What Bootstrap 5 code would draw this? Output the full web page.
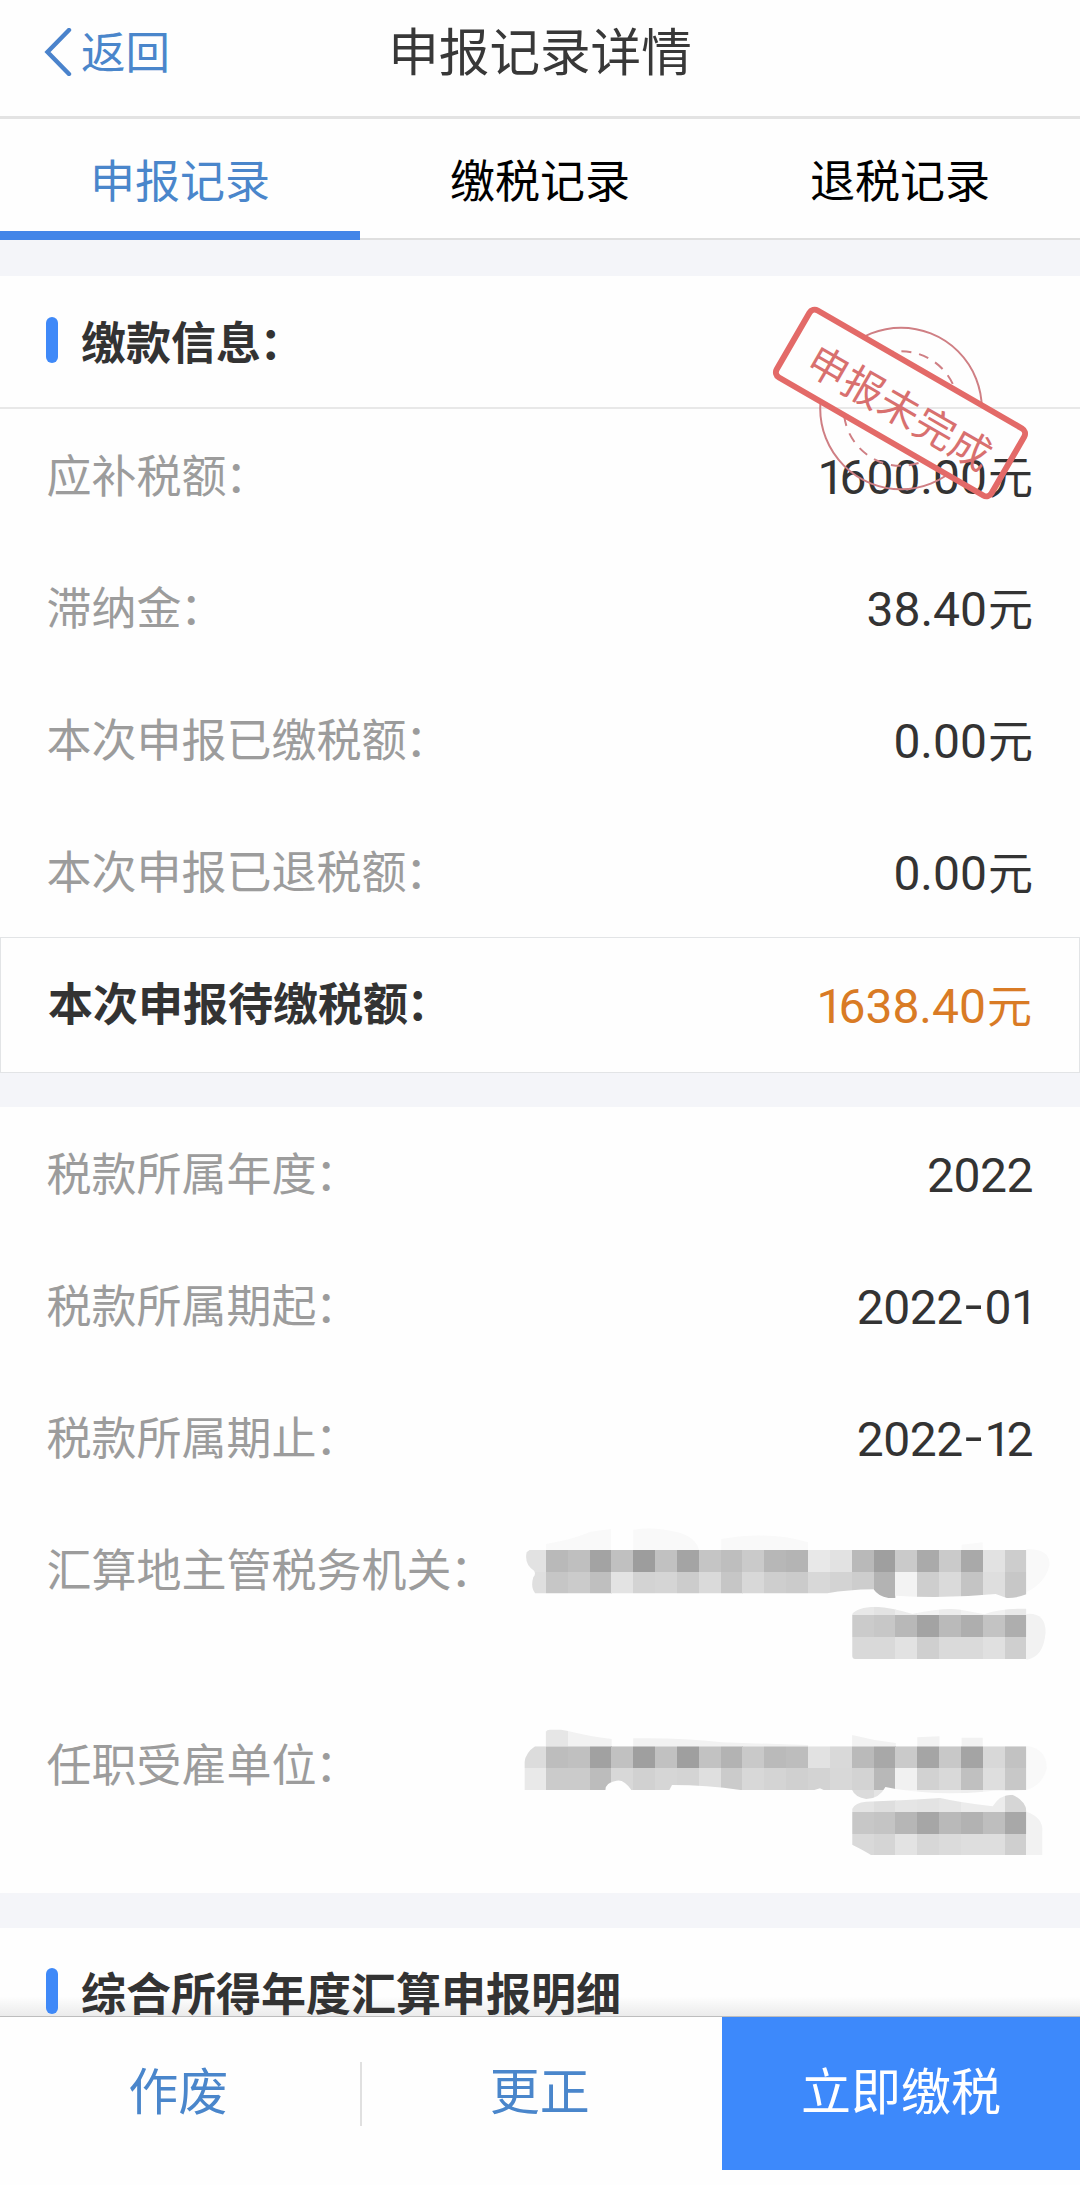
<!DOCTYPE html>
<html lang="zh-CN">
<head>
<meta charset="utf-8">
<meta name="viewport" content="width=device-width, initial-scale=1">
<title>申报记录详情</title>
<link href="https://cdn.jsdelivr.net/npm/bootstrap@5.3.0/dist/css/bootstrap.min.css" rel="stylesheet">
<style>
  body { font-family: "Noto Sans CJK SC", sans-serif; font-size: 45px; line-height: 1; color: #333; background: #fefefe; overflow: hidden; }
  .screen { width: 1080px; height: 2185px; }
  .topbar { height: 119px; border-bottom: 3px solid #e3e3e3; padding: 0 44px 18px; }
  .topbar .side { flex: 1 0 0; color: #4a86cb; }
  .topbar .side svg { margin-top: 5px; }
  .topbar .side span { margin: 2px 0 0 7px; font-size: 44.5px; }
  .topbar h1 { font-size: 50.6px; font-weight: 400; line-height: 1; color: #383838; }
  .tabs { height: 121px; border-bottom: 2px solid #dfdfdf; }
  .tabs .nav-link { color: #000; height: 121px; padding: 0 0 2px; border-radius: 0; }
  .tabs .nav-link.active { color: #4a86cb; border-bottom: 9px solid #4285e8; padding: 7px 0 0; }
  .band { background: #f4f5f9; flex: none; }
  .heading { height: 133px; border-bottom: 2px solid #e8e8e8; padding: 0 46px 4px; gap: 23px; }
  .heading h2 { font-size: 45px; font-weight: 700; line-height: 1; color: #333; padding-top: 1px; }
  .marker { width: 12px; height: 46px; border-radius: 6px; background: #3f89f8; }
  .item { height: 132px; padding: 0 47px 0 46.5px; }
  .item .key { color: #9c9c9c; padding-bottom: 4px; }
  .colon { margin-left: -1.5px; }
  .item.tall { height: 195px; padding-right: 0; }
  .item.tall .key { height: 132px; }
  .val { padding-top: 3px; white-space: nowrap; }
  .num { font-family: Roboto, sans-serif; font-size: 48px; white-space: nowrap; }
  .val .num { margin-right: 1px; }
  .year { letter-spacing: -.5px; padding-top: 5px; }
  .one { letter-spacing: -5px; }
  .dash { display: inline-block; transform: translateY(-2px) scaleX(1.3); margin: 0 5px 0 4px; }
  .due { height: 136px; border: 1px solid #e2e4e6; padding: 0 47px; }
  .due .key { padding-bottom: 7px; }
  .due .val { color: #d97b25; padding-top: 1px; }
  .stamp { position: absolute; left: 740px; top: 280px; }
  .stamp text { font-family: "Noto Sans CJK SC", sans-serif; font-size: 40.5px; letter-spacing: .6px; }
  .last { height: 88px; border: 0; padding-top: 40px; padding-bottom: 0; background: linear-gradient(#fefefe 78%, #ebebeb); }
  .last h2 { margin-top: 1px; padding-top: 0; }
  .actions { height: 154px; border-top: 1px solid #bdbdbd; font-size: 50px; color: #4a86cb; background: #fefefe; }
  .actions .btn { font-size: 50px; line-height: 1; border: 0; border-radius: 0; color: #4a86cb; padding: 0 4px 12px 0; flex: 1 0 0; }
  .actions .btn.pay { background: #3d89fb; color: #fff; flex: 0 0 358px; padding-right: 0; }
  .actions .rule { width: 2px; height: 64px; background: #e0e0e0; margin-left: -1px; }
</style>
</head>
<body>
<div class="screen d-flex flex-column position-relative">
  <header class="topbar d-flex align-items-center">
    <div class="side d-flex align-items-center">
      <svg width="30" height="48" viewBox="0 0 30 48" fill="none" stroke="#4a83cc" stroke-width="4.4" stroke-linecap="round"><path d="M25 2 3.5 24 25 46"/></svg>
      <span>返回</span>
    </div>
    <h1 class="m-0">申报记录详情</h1>
    <div class="side"></div>
  </header>

  <nav class="tabs nav nav-justified flex-nowrap">
    <a class="nav-link active d-flex align-items-center justify-content-center">申报记录</a>
    <a class="nav-link d-flex align-items-center justify-content-center">缴税记录</a>
    <a class="nav-link d-flex align-items-center justify-content-center">退税记录</a>
  </nav>

  <div class="band" style="height:36px"></div>

  <section>
    <div class="heading d-flex align-items-center"><span class="marker"></span><h2 class="m-0">缴款信息<span class="colon">：</span></h2></div>
    <div class="item d-flex align-items-center justify-content-between"><span class="key">应补税额<span class="colon">：</span></span><span class="val"><span class="num"><span class="one">1</span>600.00</span>元</span></div>
    <div class="item d-flex align-items-center justify-content-between"><span class="key">滞纳金<span class="colon">：</span></span><span class="val"><span class="num">38.40</span>元</span></div>
    <div class="item d-flex align-items-center justify-content-between"><span class="key">本次申报已缴税额<span class="colon">：</span></span><span class="val"><span class="num">0.00</span>元</span></div>
    <div class="item d-flex align-items-center justify-content-between"><span class="key">本次申报已退税额<span class="colon">：</span></span><span class="val"><span class="num">0.00</span>元</span></div>
    <div class="due d-flex align-items-center justify-content-between"><span class="key fw-bold">本次申报待缴税额<span class="colon">：</span></span><span class="val"><span class="num"><span class="one">1</span>638.40</span>元</span></div>
  </section>

  <div class="band" style="height:34px"></div>

  <section>
    <div class="item d-flex align-items-center justify-content-between"><span class="key">税款所属年度<span class="colon">：</span></span><span class="num year">2022</span></div>
    <div class="item d-flex align-items-center justify-content-between"><span class="key">税款所属期起<span class="colon">：</span></span><span class="num year">2022<span class="dash">-</span>0<span class="one">1</span></span></div>
    <div class="item d-flex align-items-center justify-content-between"><span class="key">税款所属期止<span class="colon">：</span></span><span class="num year">2022<span class="dash">-</span><span class="one">1</span>2</span></div>
    <div class="item tall d-flex align-items-start justify-content-between">
      <span class="key d-flex align-items-center text-nowrap">汇算地主管税务机关<span class="colon">：</span></span>
      <svg class="flex-shrink-0" id="office" width="580" height="176" viewBox="0 12 1568 528" preserveAspectRatio="none" style="margin-left:-60px">
        <defs>
          <clipPath id="c1"><path d="M80 153H1423V286Q1395 298 1370 297L1340 285Q1200 300 1070 290V297H1050Q1022 292 1010 271Q940 272 885 283H95Q82 265 90 235Q98 225 92 215Q65 195 72 160Z"/></clipPath>
          <clipPath id="c2"><path d="M952 345Q965 325 1015 323Q1060 325 1115 345Q1200 325 1245 332L1310 346Q1350 328 1423 329V480H960Q952 478 952 470Z"/></clipPath>
        </defs>
        <path fill="#f9f9f9" d="M124 153V135Q200 120 245 98L300 90V153ZM360 153V92Q420 82 480 100Q530 115 538 153ZM598 153V120Q730 95 833 130V153ZM1248 153V137L1305 130V153ZM1423 150Q1490 150 1485 200Q1475 250 1423 280Z"/>
        <path fill="#f2f2f2" d="M1423 345Q1475 340 1475 400Q1470 475 1423 482Z"/>
      </svg>
    </div>
    <div class="item tall d-flex align-items-start justify-content-between">
      <span class="key d-flex align-items-center text-nowrap">任职受雇单位<span class="colon">：</span></span>
      <svg class="flex-shrink-0" id="employer" width="580" height="170" viewBox="0 0 1568 510" preserveAspectRatio="none" style="margin-top:11px">
        <defs>
          <clipPath id="c3"><path d="M95 112H1423V243L1370 245Q1340 243 1310 248Q1180 260 1070 240L1042 234Q1025 270 990 270Q960 265 952 243H875L865 238L850 243H650Q560 228 465 228L458 243H355Q335 210 315 215Q285 220 285 243H66V160Q70 130 95 112Z"/></clipPath>
          <clipPath id="c4"><path d="M952 300Q960 280 990 278Q1080 275 1190 267Q1240 280 1332 292Q1350 257 1385 257Q1420 275 1423 305V438H1003Q985 425 952 407Z"/></clipPath>
        </defs>
        <path fill="#e6e6e6" d="M124 112V68Q126 62 135 62H165L184 66V112Z"/>
        <path fill="#f2f2f2" d="M184 112V66Q240 82 302 90V112ZM360 112V88Q480 85 600 100L833 108V112ZM952 112V78Q1010 95 1070 102V112ZM1128 112V85L1188 82V112ZM1248 112V86H1305V112Z"/>
        <path fill="#f9f9f9" d="M1423 110Q1480 120 1478 180Q1465 230 1423 243Z"/>
        <path fill="#f2f2f2" d="M1423 308Q1470 325 1466 370V438H1423Z"/>
      </svg>
    </div>
  </section>

  <div class="band" style="height:35px"></div>

  <div class="heading last d-flex align-items-start flex-shrink-0"><span class="marker"></span><h2 class="mb-0">综合所得年度汇算申报明细</h2></div>

  <footer class="actions d-flex align-items-stretch flex-shrink-0">
    <button class="btn">作废</button>
    <span class="rule align-self-center"></span>
    <button class="btn">更正</button>
    <button class="btn pay">立即缴税</button>
  </footer>

  <!-- status stamp laid over the first row -->
  <svg class="stamp" width="340" height="240" viewBox="0 0 340 240" fill="none">
    <defs>
      <clipPath id="outside"><path clip-rule="evenodd" d="M0 0H340V240H0ZM72.5 26 33 93.5 249.5 218.5 289 151Z"/></clipPath>
    </defs>
    <g clip-path="url(#outside)" stroke="#cf7f84">
      <circle cx="161" cy="128.5" r="80.8" stroke-width="2"/>
      <circle cx="161" cy="128.5" r="57.3" stroke-width="2" stroke-dasharray="10 8"/>
    </g>
    <g transform="translate(160.5 123) rotate(30)">
      <rect x="-124" y="-38.7" width="248" height="77.4" rx="6" stroke="#e36a68" stroke-width="6"/>
      <text x="2" y="19.5" text-anchor="middle" fill="#d8706f">申报未完成</text>
    </g>
  </svg>
</div>
<script src="https://cdn.jsdelivr.net/npm/bootstrap@5.3.0/dist/js/bootstrap.bundle.min.js"></script>
<script>
  // Grey levels of the pixelated (redacted) text, one hex byte per cell
  const CELL = 59.05;
  function mosaic(svgId, clip, x0, rows) {
    const ns = 'http://www.w3.org/2000/svg';
    const g = document.createElementNS(ns, 'g');
    g.setAttribute('clip-path', `url(#${clip})`);
    g.setAttribute('shape-rendering', 'crispEdges');
    rows.forEach(([y, h, levels]) => levels.split(' ').forEach((v, i) => {
      const r = document.createElementNS(ns, 'rect');
      r.setAttribute('x', x0 + i * CELL); r.setAttribute('y', y);
      r.setAttribute('width', CELL + .5); r.setAttribute('height', h);
      r.setAttribute('fill', '#' + v + v + v);
      g.appendChild(r);
    }));
    document.getElementById(svgId).appendChild(g);
  }
  mosaic('office', 'c1', 65, [
    [153, 65, 'e2 b9 bf a3 c0 9d c1 a4 c5 be ca b7 b4 e8 e2 b9 9f ca aa ca a9 e2 cd'],
    [218, 82, 'df c6 cb bf e3 d3 d5 cc da c6 d8 ce cb d8 d3 cd b3 f3 ce da c4 de c7']]);
  mosaic('office', 'c2', 951, [
    [320, 28, 'e8 e3 ec f2 ec f2 f1 e9'],
    [348, 66, 'cb c7 b8 a3 ba ae c3 ae'],
    [414, 68, 'd9 d9 e2 cf da da e0 cf']]);
  mosaic('employer', 'c3', 65, [
    [112, 65, 'dc bd c0 a1 c1 9f c1 9f c2 b3 c9 ba bd e2 d9 ba a8 ca a5 c8 a4 d8 c2'],
    [177, 66, 'e9 cb cb bc d8 d1 d6 d4 df cb d8 d4 d0 d3 d8 d3 b8 f1 d2 d9 c0 de c8'],
    [243, 30, 'fc fc fc fc fc fc fc fc fc fc fc fc fc fc fc db e4 f6 f0 f0 ee f4 ec']]);
  mosaic('employer', 'c4', 951, [
    [255, 53, 'e4 de e5 e3 e6 ec ec d6'],
    [308, 66, 'c7 c4 b6 a6 b9 b2 be a8'],
    [374, 66, 'd9 d5 e3 d7 db de de cf']]);
</script>
</body>
</html>
